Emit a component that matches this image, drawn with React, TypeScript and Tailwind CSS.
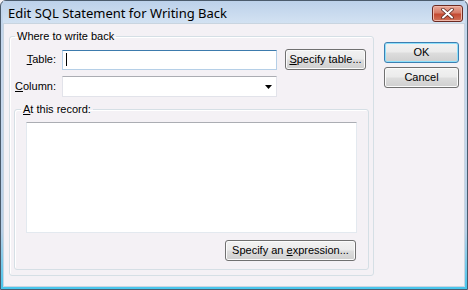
import React from 'react';

const bodyFont = { fontFamily: '"Liberation Sans", Tahoma, Arial, sans-serif' };
const titleFont = { fontFamily: '"Noto Sans", "Segoe UI", Arial, sans-serif' };

function VistaButton({ children, width, isDefault = false }: { children: React.ReactNode; width: string; isDefault?: boolean }) {
  return (
    <button
      className={`${width} h-[21px] whitespace-nowrap rounded-[3px] border text-[11px] leading-[15px] text-black bg-[linear-gradient(to_bottom,#f2f2f2_0%,#ebebeb_48%,#dddddd_52%,#cfcfcf_100%)] ${
        isDefault
          ? 'border-[#3c7fb1] shadow-[inset_0_0_0_1px_#8ee0fb]'
          : 'border-[#707070] shadow-[inset_0_0_0_1px_#fbfbfb]'
      }`}
    >
      {children}
    </button>
  );
}

export default function App() {
  return (
    <div style={bodyFont} className="w-[468px] h-[290px] bg-[#f4f1f5]">
      <div className="w-[468px] h-[290px] flex flex-col rounded-t-[6px] border border-[#4b5b6c] bg-[linear-gradient(to_bottom,#c3d6ec_0%,#c6d8ed_40%,#b6cfe7_80%,#46c5ec_100%)] px-[2px] pb-[2px]">
        {/* title bar */}
        <div className="h-[22px] flex items-center justify-between pl-[5px] pr-[2px] bg-[linear-gradient(to_bottom,#bcd1ea,#d3e2f2)]">
          <span style={titleFont} className="text-[13px] leading-[16px] text-black pt-[2px]">
            Edit SQL Statement for Writing Back
          </span>
          <div className="w-[31px] h-[17px] mt-[3px] rounded-[3px] border border-[#6b2a22] bg-[linear-gradient(to_bottom,#e9a99a_0%,#d67c68_45%,#c44a32_55%,#d0735a_100%)] shadow-[inset_0_0_0_1px_#f0b8aa] flex items-center justify-center">
            <svg width="13" height="11" viewBox="0 0 13 11">
              <path d="M2 1.5 L11 9.5 M11 1.5 L2 9.5" stroke="#5b2a24" strokeWidth="3.6" strokeLinecap="round" />
              <path d="M2 1.5 L11 9.5 M11 1.5 L2 9.5" stroke="#ffffff" strokeWidth="2" strokeLinecap="round" />
            </svg>
          </div>
        </div>

        {/* client area */}
        <div className="flex-1 border border-[#c9d5e0] bg-[#f4f1f5] flex pt-[5px] pl-[5px] gap-[10px] text-[11px] leading-[15px] text-black">
          <fieldset className="w-[364px] h-[247px] rounded-[3px] border border-[#d5dfe5] shadow-[inset_1px_1px_0_#ffffff]">
            <legend className="ml-[5px] px-[2px]">Where to write back</legend>

            <div className="pl-[0px] pr-[4px]">
              <div className="flex items-center mt-[5px]">
                <label className="w-[46px] text-right mr-[6px] whitespace-nowrap">
                  <u>T</u>able:
                </label>
                <div className="w-[215px] h-[20px] border border-[#b5cfe7] border-t-[#3d7bad] bg-white flex items-center pl-[3px]">
                  <div className="w-px h-[13px] bg-black" />
                </div>
                <div className="ml-[8px]">
                  <VistaButton width="w-[81px]">
                    <u>S</u>pecify table...
                  </VistaButton>
                </div>
              </div>

              <div className="flex items-center mt-[6px]">
                <label className="w-[46px] text-right mr-[6px] whitespace-nowrap">
                  <u>C</u>olumn:
                </label>
                <div className="w-[215px] h-[21px] border border-[#e2e3ea] border-t-[#abadb3] bg-white flex items-center justify-end pr-[4px]">
                  <svg width="7" height="4" viewBox="0 0 7 4">
                    <path d="M0 0 H7 L3.5 4 Z" fill="#000" />
                  </svg>
                </div>
              </div>

              <fieldset className="ml-[4px] mt-[5px] w-[354px] h-[168px] rounded-[3px] border border-[#d5dfe5] shadow-[inset_1px_1px_0_#ffffff]">
                <legend className="ml-[6px] px-[2px]">
                  <u>A</u>t this record:
                </legend>
                <div className="px-[11px]">
                  <div className="mt-[5px] w-[331px] h-[111px] border border-[#e3e9ef] border-t-[#abadb3] bg-white" />
                  <div className="flex justify-end mt-[7px] pr-[1px]">
                    <VistaButton width="w-[131px]">
                      Specify an <u>e</u>xpression...
                    </VistaButton>
                  </div>
                </div>
              </fieldset>
            </div>
          </fieldset>

          <div className="flex flex-col gap-[4px] mt-[13px]">
            <VistaButton width="w-[75px]" isDefault>
              OK
            </VistaButton>
            <VistaButton width="w-[75px]">Cancel</VistaButton>
          </div>
        </div>
      </div>
    </div>
  );
}
